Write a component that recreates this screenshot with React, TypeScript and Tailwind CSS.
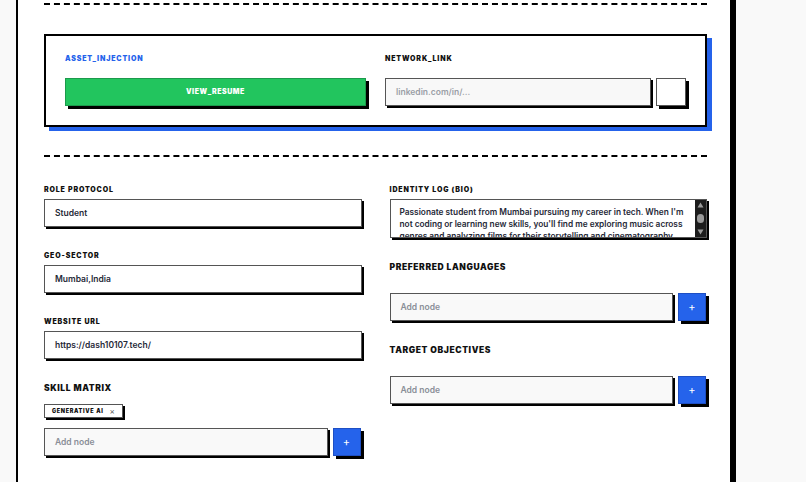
const label = "block h-[7px] text-[7px] leading-[7px] font-black tracking-[0.12em] text-[#111] uppercase";
const heading = "block h-[8px] text-[8.5px] leading-[8px] font-black tracking-[0.07em] text-[#111] uppercase";
const field =
  "h-[28px] flex items-center px-[10px] text-[8.5px] font-semibold text-[#1f2937] border border-[#555] shadow-[2px_2px_0_#000]";

function Field({ name, value }: { name: string; value: string }) {
  return (
    <div>
      <span className={label}>{name}</span>
      <div className={`${field} mt-[6px] bg-white`}>{value}</div>
    </div>
  );
}

function AddNode() {
  return (
    <div className="flex gap-[5px] pr-[1px]">
      <div className={`${field} flex-1 bg-[#f9f9f9] font-normal text-[#8a8f98]`}>Add node</div>
      <button className="w-[28px] h-[28px] bg-[#2563eb] text-white text-[11px] leading-none shadow-[3px_3px_0_#000] border border-[#1e4fc4]">
        +
      </button>
    </div>
  );
}

export default function App() {
  return (
    <div
      className="w-[806px] h-[482px] overflow-hidden bg-[#f9f9f9] flex"
      style={{ fontFamily: "Inter, 'Liberation Sans', sans-serif" }}
    >
      <div className="ml-[16px] w-[720px] shrink-0 border-l-2 border-r-[6px] border-black bg-white pl-[26px] pr-[23px] pt-[3px]">
        <div className="border-t-2 border-dashed border-black" />

        {/* Asset card */}
        <div className="mt-[29px] border-2 border-black bg-white shadow-[5px_4px_0_#2563eb] p-[19px] grid grid-cols-2 gap-[19px]">
          <div>
            <span className={`${label} !text-[#2563eb]`}>ASSET_INJECTION</span>
            <button className="mt-[16px] w-full h-[28px] bg-[#22c55e] border border-[#1c9a4c] shadow-[3px_3px_0_#000] text-white text-[7px] font-black tracking-[0.08em]">
              VIEW_RESUME
            </button>
          </div>
          <div>
            <span className={label}>NETWORK_LINK</span>
            <div className="mt-[16px] flex gap-[5px]">
              <div className={`${field} flex-1 bg-[#f8f8f8] font-normal text-[#9a9ea6]`}>linkedin.com/in/...</div>
              <div className="w-[30px] h-[28px] bg-white border border-[#555] shadow-[3px_3px_0_#000]" />
            </div>
          </div>
        </div>

        <div className="mt-[28px] border-t-2 border-dashed border-black" />

        <div className="mt-[29px] grid grid-cols-2 gap-[28px]">
          {/* Left column */}
          <div className="flex flex-col gap-[25px]">
            <Field name="ROLE PROTOCOL" value="Student" />
            <Field name="GEO-SECTOR" value="Mumbai,India" />
            <Field name="WEBSITE URL" value="https://dash10107.tech/" />
            <div>
              <span className={heading}>SKILL MATRIX</span>
              <div className="mt-[12px] flex">
                <span className="h-[14px] flex items-center gap-[6px] px-[7px] bg-white border border-[#555] shadow-[2px_2px_0_#000] text-[5.5px] font-black tracking-[0.12em] text-[#111]">
                  GENERATIVE AI
                  <span className="text-[8px] font-normal text-[#555] leading-none">×</span>
                </span>
              </div>
              <div className="mt-[10px]">
                <AddNode />
              </div>
            </div>
          </div>

          {/* Right column */}
          <div className="flex flex-col gap-[25px]">
            <div>
              <span className={label}>IDENTITY LOG (BIO)</span>
              <div className="mt-[6px] h-[39px] flex border border-[#555] shadow-[2px_2px_0_#000] bg-white overflow-hidden">
                <p className="flex-1 pl-[9px] pr-[6px] pt-[6px] text-[8.3px] leading-[12px] font-semibold text-[#1f2937]">
                  Passionate student from Mumbai pursuing my career in tech. When I'm not coding or learning new
                  skills, you'll find me exploring music across genres and analyzing films for their storytelling
                  and cinematography.
                </p>
                <div className="w-[11px] bg-[#1c1c1c] flex flex-col items-center justify-between py-[2px]">
                  <svg width="7" height="6" viewBox="0 0 7 6">
                    <path d="M3.5 0.5 L6.5 5.5 L0.5 5.5 Z" fill="#9a9a9a" />
                  </svg>
                  <div className="w-[7px] h-[9px] rounded-full bg-[#9a9a9a]" />
                  <svg width="7" height="6" viewBox="0 0 7 6">
                    <path d="M0.5 0.5 L6.5 0.5 L3.5 5.5 Z" fill="#9a9a9a" />
                  </svg>
                </div>
              </div>
            </div>
            <div>
              <span className={heading}>PREFERRED LANGUAGES</span>
              <div className="mt-[22px]">
                <AddNode />
              </div>
            </div>
            <div>
              <span className={heading}>TARGET OBJECTIVES</span>
              <div className="mt-[22px]">
                <AddNode />
              </div>
            </div>
          </div>
        </div>
      </div>
    </div>
  );
}
